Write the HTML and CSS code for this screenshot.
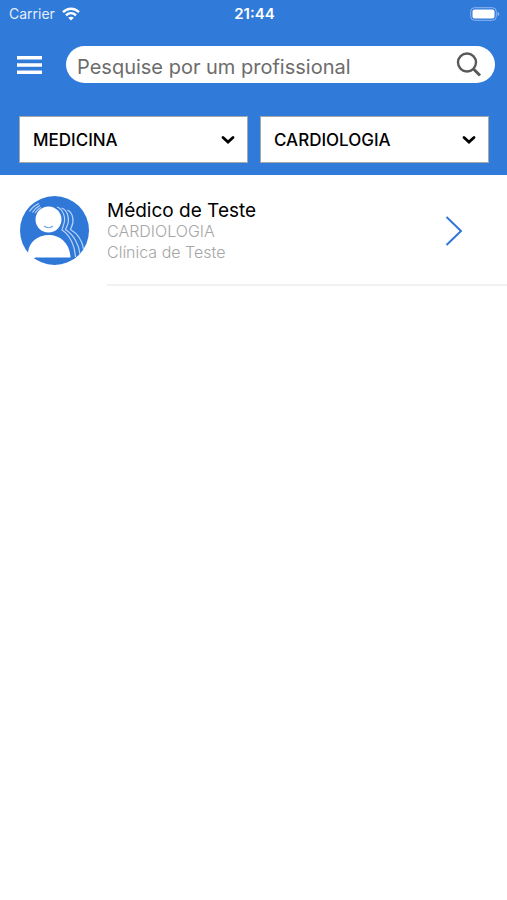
FILE: index.html
```html
<!DOCTYPE html>
<html lang="pt">
<head>
<meta charset="utf-8">
<meta name="viewport" content="width=device-width, initial-scale=1">
<title>Profissionais</title>
<link rel="stylesheet" href="styles.css">
</head>
<body>
<header class="header">
  <div class="status">
    <div class="carrier">
      <span>Carrier</span>
      <svg width="18" height="14" viewBox="0 0 18 14" fill="none" stroke="#fff" stroke-width="2.4" aria-hidden="true">
        <path d="M1 5.2C5.6 .6 12.400 .6 17 5.2"/>
        <path d="M4 8.400C6.900 5.600 11.100 5.600 14 8.400"/>
        <path d="M6.200 10.800C7.800 9.300 10.200 9.300 11.800 10.800L9 13.600Z" fill="#fff" stroke="none"/>
      </svg>
    </div>
    <time class="clock">21:44</time>
    <svg class="battery" width="30" height="14" viewBox="0 0 30 14" aria-hidden="true">
      <rect x=".7" y=".7" width="25.600" height="12.600" rx="3.800" fill="none" stroke="#8fb7ee"/>
      <rect x="2.500" y="2.500" width="22" height="9" rx="2" fill="#fff"/>
      <path d="M27.600 4.800C29.800 5.600 29.800 8.400 27.600 9.200Z" fill="#8fb7ee"/>
    </svg>
  </div>
  <div class="search-row">
    <button class="menu" type="button" aria-label="Menu">
      <svg width="25" height="20" viewBox="0 0 25 20" fill="#fff"><path d="M0 1h25v3.400H0zM0 8.300h25v3.400H0zM0 15.600h25V19H0z"/></svg>
    </button>
    <form class="search">
      <input type="search" aria-label="Pesquise por um profissional" placeholder="Pesquise por um profissional">
      <button type="button" class="find" aria-label="Pesquisar">
        <svg width="26" height="26" viewBox="0 0 26 26" fill="none" stroke="#595959"><circle cx="11" cy="10.500" r="9" stroke-width="2.400"/><path d="M17.500 17L24 23.500" stroke-width="3"/></svg>
      </button>
    </form>
  </div>
  <div class="filters">
    <div class="filter">
      <select aria-label="Área"><option>MEDICINA</option></select>
      <svg width="14" height="10" viewBox="0 0 14 10" aria-hidden="true"><path d="M2 2.500L7 7L12 2.500"/></svg>
    </div>
    <div class="filter">
      <select aria-label="Especialidade"><option>CARDIOLOGIA</option></select>
      <svg width="14" height="10" viewBox="0 0 14 10" aria-hidden="true"><path d="M2 2.500L7 7L12 2.500"/></svg>
    </div>
  </div>
</header>
<main>
  <a class="doctor" href="#medico">
    <svg class="avatar" width="70" height="70" viewBox="0 0 70 70" aria-hidden="true">
      <circle cx="34.500" cy="34.500" r="34.500" fill="#2f78d8"/>
      <g fill="none" stroke="#b9d4f6" stroke-width="1.200">
        <path d="M9.500 15.500Q13 10 19 7.500M12.500 16.500Q15 12 20 9.500M15 17Q17 13.500 21 11.500"/>
        <path d="M37 11C43 13 46.500 22 43.500 29L42 34C50 39 55 50 55.500 61"/>
        <path d="M41.500 12C48 14 50 24 47 30L45.500 33.500C54 39 59 49 60 58"/>
        <path d="M47.500 14C53 17 54.500 25 51.500 31L50.500 33.500C58 38 62.500 46 63.500 53"/>
      </g>
      <circle cx="28.500" cy="23.500" r="13" fill="#fff"/>
      <path d="M24 30Q28.500 33.500 33 30" fill="none" stroke="#75a8e8" stroke-width="1.200"/>
      <path d="M8 56.500C9 46 18 39 29 39S50 47 50.500 61.500H15L8 70H0V56.500Z" fill="#fff"/>
    </svg>
    <div class="info">
      <div class="details">
        <h2>Médico de Teste</h2>
        <p>CARDIOLOGIA</p>
        <p>Clínica de Teste</p>
      </div>
      <svg class="arrow" width="18" height="30" viewBox="0 0 18 30" fill="none" stroke="#2f78d8" stroke-width="2" aria-hidden="true"><path d="M1.500 1L16 15L1.500 29"/></svg>
    </div>
  </a>
</main>
</body>
</html>
```
FILE: styles.css
```css
* { box-sizing: border-box; }

body {
  margin: 0;
  background: #fff;
  color: #000;
  font-family: Inter, "Liberation Sans", sans-serif;
}

button {
  display: flex;
  padding: 0;
  border: 0;
  background: none;
}

.header {
  background: #307ada;
  padding-bottom: 12px;
}

.status {
  display: grid;
  grid-template-columns: 1fr auto 1fr;
  align-items: center;
  height: 27px;
  padding: 0 7px 0 9px;
  color: #fff;
  font-size: 14px;
}

.carrier {
  display: flex;
  align-items: center;
  gap: 7px;
  color: #e4eefb;
}

.clock {
  font-size: 15px;
  font-weight: 600;
}

.battery { justify-self: end; }

.search-row {
  display: flex;
  align-items: center;
  gap: 24px;
  padding: 19px 12px 0 17px;
}

.search {
  display: flex;
  flex: 1;
  align-items: center;
  height: 37px;
  padding: 0 13px 0 11px;
  border-radius: 19px;
  background: #fff;
}

.search input {
  flex: 1;
  min-width: 0;
  height: 37px;
  padding: 4px 0 0;
  border: 0;
  outline: 0;
  background: none;
  font: 20px Inter, "Liberation Sans", sans-serif;
}

.search input::placeholder {
  color: #6c6c6c;
  opacity: 1;
}

.filters {
  display: grid;
  grid-template-columns: 1fr 1fr;
  gap: 12px;
  padding: 33px 18px 0 19px;
}

.filter {
  display: grid;
  align-items: center;
}

.filter select,
.filter svg { grid-area: 1 / 1; }

.filter select {
  width: 100%;
  height: 47px;
  padding: 0 32px 0 13px;
  border: 1px solid #a3a8ad;
  border-radius: 0;
  appearance: none;
  background: #fff;
  color: #000;
  font: 500 17px Inter, "Liberation Sans", sans-serif;
}

.filter svg {
  justify-self: end;
  margin-right: 13px;
  pointer-events: none;
  fill: none;
  stroke: #000;
  stroke-width: 2.8;
  stroke-linecap: round;
}

.doctor {
  display: flex;
  align-items: flex-start;
  gap: 17px;
  padding: 21px 0 0 20px;
  color: inherit;
  text-decoration: none;
}

.avatar { flex: none; }

.info {
  display: flex;
  flex: 1;
  justify-content: space-between;
  align-items: flex-start;
  height: 90px;
  padding-right: 44px;
  border-bottom: 2px solid #f2f2f2;
}

.details h2,
.details p {
  margin: 0;
  font-size: 16px;
  line-height: 21px;
}

.details h2 {
  padding-top: 4px;
  font-size: 19px;
  font-weight: 400;
}

.details p {
  color: #a6a6a6;
  font-weight: 300;
}

.arrow { margin-top: 20px; }
```
